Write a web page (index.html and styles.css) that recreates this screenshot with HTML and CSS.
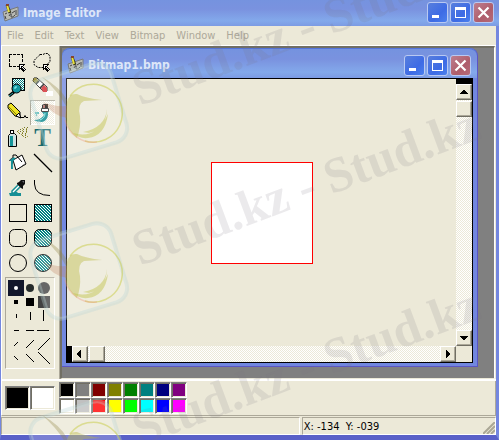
FILE: index.html
```html
<!DOCTYPE html>
<html lang="en">
<head>
<meta charset="utf-8">
<title>Image Editor</title>
<link rel="stylesheet" href="styles.css">
</head>
<body>
<svg class="defs" aria-hidden="true">
  <defs>
    <pattern id="hatch" width="3" height="3" patternUnits="userSpaceOnUse">
      <rect width="3" height="3" fill="#008080"/>
      <path d="M0 0h1v1h-1zM1 1h1v1h-1zM2 2h1v1h-1z" fill="#fff"/>
    </pattern>
    <pattern id="check" width="2" height="2" patternUnits="userSpaceOnUse">
      <rect width="2" height="2" fill="#fff"/>
      <path d="M0 0h1v1h-1zM1 1h1v1h-1z" fill="#008080"/>
    </pattern>
    <symbol id="cursor" viewBox="0 0 8 8">
      <path d="M0 0h6v1h-1v1h-1v1h1v1h1v1h1v1h-1v1h-1v1h-1v-1h-1v-1h-1v-1h-1v1h-1z" fill="#000"/>
      <path d="M1 1h3v1h-1v2h1v1h1v1h1v-1h-1v-1h-1v-1h-1v-1h-1v2h-1z" fill="#fff"/>
    </symbol>
    <symbol id="app" viewBox="0 0 18 18">
      <path d="M1 8L16 3V12L3 17Z" fill="#b9bbb5" stroke="#777a7b"/>
      <path d="M3 10l2-1M3 12l1 3M7 12q3-5 2 0q0 3 4-1M10 9l3-2M14 6v5" fill="none" stroke="#444"/>
      <path d="M5 1L8 9" stroke="#3a3a20" stroke-width="3"/>
      <path d="M5 1L7 8" stroke="#e9e23c" stroke-width="2"/>
      <path d="M4 0h3v2h-3z" fill="#85442c"/>
    </symbol>
    <symbol id="min" viewBox="0 0 21 21"><path d="M5 13h7v3h-7z" fill="#fff"/></symbol>
    <symbol id="max" viewBox="0 0 21 21"><path d="M5 5h11v11h-11zM6 8v7h9v-7z" fill="#fff" fill-rule="evenodd"/></symbol>
    <symbol id="close" viewBox="0 0 21 21"><path d="M5.500 5.500L15.500 15.500M15.500 5.500L5.500 15.500" stroke="#fff" stroke-width="2.200"/></symbol>
    <symbol id="tile" viewBox="0 0 112 112" overflow="visible">
      <g transform="rotate(-17 56 56)">
        <rect x="14" y="14" width="84" height="82" rx="15" fill="#fff" fill-opacity=".2" stroke="#bcd5d5" stroke-opacity=".34" stroke-width="4"/>
      </g>
      <path d="M47 40A29 29 0 1 1 62 85" fill="none" stroke="#c7cb43" stroke-opacity=".5" stroke-width="1.500"/>
      <path d="M42 64A29 29 0 0 0 74 86" fill="none" stroke="#ef9c83" stroke-opacity=".4" stroke-width="1.500"/>
      <path d="M44 46Q46 37 54 38Q62 42 79 44L61 45Q54 48 57 60Q58 71 54 82Q44 74 42 61Z" fill="#b9bb42" fill-opacity=".42"/>
      <path d="M19 21Q37 31 44 44L44 52Q37 37 19 21Z" fill="#8f8440" fill-opacity=".32"/>
      <path d="M50 77Q73 84 85 58Q82 80 65 82Q56 83 50 77M60 76Q82 72 84 53Q83 73 66 77Z" fill="#bfc045" fill-opacity=".45"/>
      <path d="M20 46Q31 51 44 50L44 62Q30 60 20 46Z" fill="#b86d45" fill-opacity=".25"/>
    </symbol>
  </defs>
</svg>

<main class="window">
  <header class="titlebar">
    <svg class="app-icon"><use href="#app"/></svg>
    <h1>Image Editor</h1>
    <div class="controls">
      <button aria-label="Minimize"><svg><use href="#min"/></svg></button>
      <button aria-label="Maximize"><svg><use href="#max"/></svg></button>
      <button class="close" aria-label="Close"><svg><use href="#close"/></svg></button>
    </div>
  </header>

  <nav class="menu">
    <button>File</button><button>Edit</button><button>Text</button><button>View</button><button>Bitmap</button><button>Window</button><button>Help</button>
  </nav>

  <div class="workspace">
    <aside class="sidebar">
      <div class="tools">
        <button aria-label="Rectangle select"><svg viewBox="0 0 25 25"><path d="M4 4.500h14M4 16.500h10M4.500 5v12M17.500 5v8" fill="none" stroke="#000" stroke-dasharray="3 1"/><use href="#cursor" x="14" y="14" width="8" height="8"/></svg></button>
        <button aria-label="Free select"><svg viewBox="0 0 25 25"><path d="M10 4.500h3l2-1h3l2 3v5l-3 3M10 4.500l-3 3-3 3v4l4 3h5" fill="none" stroke="#000" stroke-dasharray="2 1"/><use href="#cursor" x="13" y="14" width="8" height="8"/></svg></button>
        <button aria-label="Zoom"><svg viewBox="0 0 25 25"><rect x="7.500" y="3.500" width="12" height="12" fill="url(#check)" stroke="#000"/><path d="M9 17L4 21" stroke="#000" stroke-width="3"/><path d="M8 18l-4 3" stroke="#3aa"/><circle cx="11.500" cy="13.500" r="4.500" fill="#1497a0" stroke="#000"/><path d="M9 13h2v-2" fill="none" stroke="#9ff"/></svg></button>
        <button aria-label="Eraser"><svg viewBox="0 0 25 25"><path d="M16 16h7v5h-7z" fill="#fff"/><path d="M4 3h3L17 12v4h-4L3 6z" fill="#fff" stroke="#111"/><path d="M4 3h2L9 6 6 9 3 6z" fill="#a69b4b"/><path d="M11 13L14 10 17 13v4h-4z" fill="#d3272c"/><path d="M6 9l3-3M10 13l4-4" stroke="#111" stroke-width="1.500"/></svg></button>
        <button aria-label="Pencil"><svg viewBox="0 0 25 25"><path d="M3 5l3-2L15 12v5l-5-1L3 8z" fill="#eee325" stroke="#000"/><path d="M4 7L12 15" stroke="#868000"/><path d="M11 16l3-3 2 5z" fill="#fff" stroke="#000"/><path d="M15 17.500h4l1-2 1 2h2" fill="none" stroke="#000"/></svg></button>
        <button class="selected" aria-label="Brush" aria-pressed="true"><svg viewBox="0 0 25 25"><path d="M14 4h4v5h-6v-4z" fill="#111"/><path d="M13 5h2v3h-2z" fill="#a9655d"/><path d="M11.500 8.500h7v3h-7z" fill="#fff" stroke="#222"/><path d="M12 12h6v3q-1 6-6 7-5 0-8-2 7 0 10-5z" fill="#08888d"/><path d="M15 13q0 5-5 7" fill="none" stroke="#8ee"/><path d="M5 12h4v2H7v2H6v-2H5z" fill="#50b7b6"/></svg></button>
        <button aria-label="Airbrush"><svg viewBox="0 0 25 25"><path d="M3.500 10.500l2-2h4l2 2v11h-8z" fill="#cde1e1" stroke="#000"/><path d="M5 11h3v10H5z" fill="#159598"/><path d="M5 5h4v3H5z" fill="#000"/><path d="M6 6h2v2H6z" fill="#fff"/><path d="M12 6.500h11M15 4.500h8M14 8.500h8M19 2.500h4M17 10.500h6M20 12.500h2" stroke="#77752b" stroke-dasharray="1 2"/><path d="M13 5.500h10M17 3.500h7M13 7.500h9M16 9.500h7M18 11.500h5" stroke="#aaa545" stroke-dasharray="1 3"/></svg></button>
        <button aria-label="Text"><svg viewBox="0 0 25 25"><text class="tool-letter" x="12.500" y="21" text-anchor="middle">T</text></svg></button>
        <button aria-label="Fill"><svg viewBox="0 0 25 25"><path d="M8 10L17 5l4 9-10 6z" fill="#fff" stroke="#000"/><path d="M8 10V5h3l6 7" fill="none" stroke="#000"/><path d="M4 11Q6 6 11 8Q7 10 8 19H6V11Z" fill="#168f96"/><path d="M4 11l4-4M17 16l3-2" stroke="#555"/></svg></button>
        <button aria-label="Line"><svg viewBox="0 0 25 25"><path d="M4 4L22 22" stroke="#000" stroke-width="1.200"/></svg></button>
        <button aria-label="Color picker"><svg viewBox="0 0 25 25"><path d="M4 18h3l1-1h4l1 1h3v3H5z" fill="#168f94"/><path d="M14 9L7 16v2h2L16 11" fill="#fff" stroke="#168f94" stroke-width="1.500"/><path d="M12 8l2-1 2-2h4v4l-2 2v3l-2-1-4-4z" fill="#111"/><path d="M17 6h2v2z" fill="#68686e"/></svg></button>
        <button aria-label="Curve"><svg viewBox="0 0 25 25"><path d="M4.500 5v4Q5 20.500 20 20.500" fill="none" stroke="#000"/></svg></button>
        <button aria-label="Rectangle"><svg viewBox="0 0 25 25"><rect x="4.500" y="4.500" width="17" height="17" fill="none" stroke="#000"/></svg></button>
        <button aria-label="Filled rectangle"><svg viewBox="0 0 25 25"><rect x="4.500" y="4.500" width="17" height="17" fill="url(#hatch)" stroke="#000"/></svg></button>
        <button aria-label="Rounded rectangle"><svg viewBox="0 0 25 25"><rect x="4.500" y="4.500" width="17" height="17" rx="5" fill="none" stroke="#000"/></svg></button>
        <button aria-label="Filled rounded rectangle"><svg viewBox="0 0 25 25"><rect x="4.500" y="4.500" width="17" height="17" rx="5" fill="url(#hatch)" stroke="#000"/></svg></button>
        <button aria-label="Ellipse"><svg viewBox="0 0 25 25"><circle cx="13" cy="13" r="8.500" fill="none" stroke="#000"/></svg></button>
        <button aria-label="Filled ellipse"><svg viewBox="0 0 25 25"><circle cx="13" cy="13" r="8.500" fill="url(#hatch)" stroke="#000"/></svg></button>
      </div>
      <div class="brushes">
        <button class="active" aria-label="Small round"><svg viewBox="0 0 14 14"><circle cx="7" cy="7" r="2" fill="#fff"/></svg></button>
        <button aria-label="Medium round"><svg viewBox="0 0 14 14"><circle cx="7" cy="7" r="4" fill="#252b2b"/></svg></button>
        <button aria-label="Large round"><svg viewBox="0 0 14 14"><circle cx="7" cy="7" r="6" fill="#414141"/></svg></button>
        <button aria-label="Small square"><svg viewBox="0 0 14 14"><path d="M5 5h4v4h-4z"/></svg></button>
        <button aria-label="Medium square"><svg viewBox="0 0 14 14"><path d="M3 3h8v8h-8z"/></svg></button>
        <button aria-label="Large square"><svg viewBox="0 0 14 14"><path d="M1 1h12v12h-12z" fill="#414141"/></svg></button>
        <button aria-label="Small vertical"><svg viewBox="0 0 14 14"><path d="M7 5h1v4h-1z"/></svg></button>
        <button aria-label="Medium vertical"><svg viewBox="0 0 14 14"><path d="M7 3h1v8h-1z"/></svg></button>
        <button aria-label="Large vertical"><svg viewBox="0 0 14 14"><path d="M6 1h1v11h-1z"/></svg></button>
        <button aria-label="Small horizontal"><svg viewBox="0 0 14 14"><path d="M5 7h5v1h-5z"/></svg></button>
        <button aria-label="Medium horizontal"><svg viewBox="0 0 14 14"><path d="M3 7h8v1h-8z"/></svg></button>
        <button aria-label="Large horizontal"><svg viewBox="0 0 14 14"><path d="M0 7h12v1h-12z"/></svg></button>
        <button aria-label="Small slash"><svg viewBox="0 0 14 14"><path d="M5 9l4-4" stroke="#000"/></svg></button>
        <button aria-label="Medium slash"><svg viewBox="0 0 14 14"><path d="M3 11l8-8" stroke="#000"/></svg></button>
        <button aria-label="Large slash"><svg viewBox="0 0 14 14"><path d="M1 13L13 1" stroke="#000"/></svg></button>
        <button aria-label="Small backslash"><svg viewBox="0 0 14 14"><path d="M5 5l4 4" stroke="#000"/></svg></button>
        <button aria-label="Medium backslash"><svg viewBox="0 0 14 14"><path d="M3 3l8 8" stroke="#000"/></svg></button>
        <button aria-label="Large backslash"><svg viewBox="0 0 14 14"><path d="M1 1l12 12" stroke="#000"/></svg></button>
      </div>
    </aside>

    <section class="desktop">
      <article class="document">
        <header class="titlebar">
          <svg class="app-icon"><use href="#app"/></svg>
          <h2>Bitmap1.bmp</h2>
          <div class="controls">
            <button aria-label="Minimize document"><svg><use href="#min"/></svg></button>
            <button aria-label="Maximize document"><svg><use href="#max"/></svg></button>
            <button class="close" aria-label="Close document"><svg><use href="#close"/></svg></button>
          </div>
        </header>
        <div class="view">
          <div class="stage"><div class="bitmap"></div></div>
          <div class="scroll vertical">
            <button aria-label="Scroll up"><svg viewBox="0 0 16 16"><path d="M7 6h2v1h1v1h1v1h1v1h-8v-1h1v-1h1v-1h1z"/></svg></button>
            <span class="thumb"></span>
            <button class="end" aria-label="Scroll down"><svg viewBox="0 0 16 16"><path d="M4 6h8v1h-1v1h-1v1h-1v1h-2v-1h-1v-1h-1v-1h-1z"/></svg></button>
          </div>
          <div class="scroll horizontal">
            <button aria-label="Scroll left"><svg viewBox="0 0 16 16"><path d="M9 4v8h-1v-1h-1v-1h-1v-1h-1v-2h1v-1h1v-1h1v-1z"/></svg></button>
            <span class="thumb"></span>
            <button class="end" aria-label="Scroll right"><svg viewBox="0 0 16 16"><path d="M6 4v8h1v-1h1v-1h1v-1h1v-2h-1v-1h-1v-1h-1v-1z"/></svg></button>
          </div>
        </div>
      </article>
    </section>
  </div>

  <section class="palette">
    <button class="current black" aria-label="Foreground: black"></button>
    <button class="current white" aria-label="Background: white"></button>
    <div class="swatches">
      <button class="black" aria-label="Black"></button><button class="gray" aria-label="Gray"></button><button class="maroon" aria-label="Maroon"></button><button class="olive" aria-label="Olive"></button><button class="green" aria-label="Green"></button><button class="teal" aria-label="Teal"></button><button class="navy" aria-label="Navy"></button><button class="purple" aria-label="Purple"></button>
      <button class="white" aria-label="White"></button><button class="silver" aria-label="Silver"></button><button class="red" aria-label="Red"></button><button class="yellow" aria-label="Yellow"></button><button class="lime" aria-label="Lime"></button><button class="cyan" aria-label="Cyan"></button><button class="blue" aria-label="Blue"></button><button class="magenta" aria-label="Magenta"></button>
    </div>
  </section>

  <footer class="status">
    <span></span>
    <output>X: -134&nbsp; Y: -039</output>
    <svg class="grip" viewBox="0 0 12 12"><path d="M0 12L12 0M4 12L12 4M8 12L12 8" stroke="#aaa795" stroke-width="2"/></svg>
  </footer>
</main>

<svg class="watermark" viewBox="0 0 499 440" aria-hidden="true">
  <use href="#tile" x="23" y="56" width="112" height="112"/>
  <use href="#tile" x="23" y="216" width="112" height="112"/>
  <use href="#tile" x="23" y="394" width="112" height="112"/>
  <text transform="translate(140 106) rotate(-20.500)">Stud.kz - Stud.kz</text>
  <text transform="translate(140 266) rotate(-20.500)">Stud.kz - Stud.kz</text>
  <text transform="translate(140 446) rotate(-20.500)">Stud.kz - Stud.kz</text>
</svg>
</body>
</html>
```
FILE: styles.css
```css
* { box-sizing: border-box; }

body {
  margin: 0;
  position: relative;
  overflow: hidden;
  font: 11px/14px "DejaVu Sans Condensed", "DejaVu Sans", sans-serif;
  color: #000;
}

button {
  display: block;
  margin: 0;
  padding: 0;
  border: 0;
  background: none;
  color: inherit;
  font: inherit;
}

svg { display: block; }
.defs { position: absolute; width: 0; height: 0; }

.window {
  display: flex;
  flex-direction: column;
  min-height: 100vh;
  border: solid #7487df;
  border-width: 0 3px 5px 1px;
  border-bottom-color: #5960c8;
  background: #ece9d8;
}

.titlebar {
  display: flex;
  align-items: center;
  height: 26px;
  margin: 0 -3px 0 -1px;
  padding: 0 5px 1px 2px;
  background: linear-gradient(#7593df, #7a92df 35%, #83a9eb 80%, #7c9be3);
}

.titlebar h1,
.titlebar h2 {
  flex: 1;
  margin: 0;
  padding-left: 3px;
  font: bold 12px/18px "DejaVu Sans Condensed", "DejaVu Sans", sans-serif;
  color: #dce6f8;
}

.app-icon { width: 18px; height: 18px; }
.controls { display: flex; gap: 2px; }

.controls button {
  width: 21px;
  height: 21px;
  border: 1px solid #b9c9f2;
  border-radius: 3px;
  background: linear-gradient(135deg, #587fdd, #3d6be5 60%, #4b80ed);
}

.controls .close { background: linear-gradient(135deg, #bd7e8f, #af5d6b 60%, #b56b79); }
.controls svg { width: 21px; height: 21px; margin: -1px; }

.menu {
  display: flex;
  gap: 11px;
  height: 19px;
  padding: 2px 6px;
  color: #aca899;
}

.workspace {
  display: flex;
  flex: 1;
  border: solid #fff;
  border-width: 1px 0 2px;
}

.sidebar {
  width: 59px;
  padding: 4px 0 9px 4px;
  border-left: 1px solid #fff;
  border-right: 1px solid #aca899;
}

.tools {
  display: grid;
  grid-template-columns: 25px 25px;
  grid-auto-rows: 25px;
  margin-left: -1px;
}

.tools svg { width: 25px; height: 25px; }
.tools .selected {
  background: repeating-conic-gradient(#fff 0 25%, #ece9d8 0 50%) 0 0 / 2px 2px;
  box-shadow: inset 1px 1px #aca899, inset -1px -1px #fff;
}
.tool-letter { font: bold 25px "Liberation Serif", serif; fill: #17696e; }

.brushes {
  display: grid;
  grid-template-columns: repeat(3, 14px);
  grid-auto-rows: 14px;
  width: 50px;
  margin: 2px 0 0 -1px;
  padding: 3px;
  border: 1px solid;
  border-color: #aca899 #fff #fff #aca899;
}

.brushes svg { width: 14px; height: 14px; }
.brushes .active { background: #12172b; box-shadow: 0 0 0 1px #12172b; }

.desktop {
  display: flex;
  flex: 1;
  padding: 0 16px 11px 0;
  border: solid;
  border-width: 2px 1px 1px 2px;
  border-color: #716f64 #fff #ece9d8 #716f64;
  margin-right: 1px;
  background: #808080;
}

.document {
  display: flex;
  flex: 1;
  flex-direction: column;
  padding: 0 4px 3px;
  border-radius: 8px 8px 0 0;
  border-right: 1px solid #5b55c4;
  border-bottom: 1px solid #5b55c4;
  background: #7187df;
}

.document .titlebar {
  height: 30px;
  margin: 0 -4px;
  padding: 3px 6px 0 5px;
  border-radius: 8px 8px 0 0;
  border-top: 1px solid #5273dc;
}

.view {
  display: grid;
  grid-template-columns: 1fr 16px;
  grid-template-rows: 1fr 16px;
  flex: 1;
  border: 1px solid #000;
  background: #ece9d8;
}

.stage { display: grid; place-items: center; }
.bitmap { width: 102px; height: 102px; border: 1px solid #f00; background: #fff; }

.scroll {
  display: flex;
  gap: 1px;
  background: repeating-conic-gradient(#fff 0 25%, #ece9d8 0 50%) 0 0 / 2px 2px;
}
.vertical { flex-direction: column; border-top: 5px solid #000; }
.horizontal { border-left: 5px solid #000; }

.scroll button,
.thumb {
  width: 16px;
  height: 16px;
  border: 1px solid;
  border-color: #fff #716f64 #716f64 #fff;
  background: #ece9d8;
  box-shadow: inset -1px -1px #aca899;
}
.scroll svg { width: 16px; height: 16px; margin: -1px; }
.vertical .end { margin-top: auto; }
.horizontal .end { margin-left: auto; }

.palette {
  display: flex;
  align-items: center;
  height: 35px;
  padding: 0 3px;
  border-left: 1px solid #fff;
  border-right: 1px solid #aca899;
  border-bottom: 1px solid #aca899;
}

.palette button {
  border: 1px solid;
  border-color: #808080 #fff #fff #808080;
  box-shadow: inset 1px 1px #716f64, inset -1px -1px #ece9d8;
}
.palette .current { width: 25px; height: 24px; }

.swatches {
  display: grid;
  grid-template-columns: repeat(8, 16px);
  grid-auto-rows: 16px;
  margin-left: 4px;
}

.black { background: #000; }
.gray { background: #808080; }
.maroon { background: #800000; }
.olive { background: #808000; }
.green { background: #008000; }
.teal { background: #008080; }
.navy { background: #000080; }
.purple { background: #800080; }
.white { background: #fff; }
.silver { background: #c0c0c0; }
.red { background: #f00; }
.yellow { background: #ff0; }
.lime { background: #0f0; }
.cyan { background: #0ff; }
.blue { background: #00f; }
.magenta { background: #f0f; }

.status {
  display: grid;
  grid-template-columns: 20fr 13fr;
  gap: 2px;
  height: 18px;
  margin-top: 1px;
  position: relative;
}

.status span,
.status output {
  padding: 2px 1px 0;
  line-height: 14px;
  border: 1px solid;
  border-color: #aca899 #fff #fff #aca899;
}

.grip { position: absolute; right: 1px; bottom: 1px; width: 12px; height: 12px; }

.watermark {
  position: absolute;
  top: 0;
  left: 0;
  width: 100%;
  pointer-events: none;
}
.watermark text {
  font: bold 50px "Liberation Serif", serif;
  fill: #777082;
  fill-opacity: .15;
}
```
